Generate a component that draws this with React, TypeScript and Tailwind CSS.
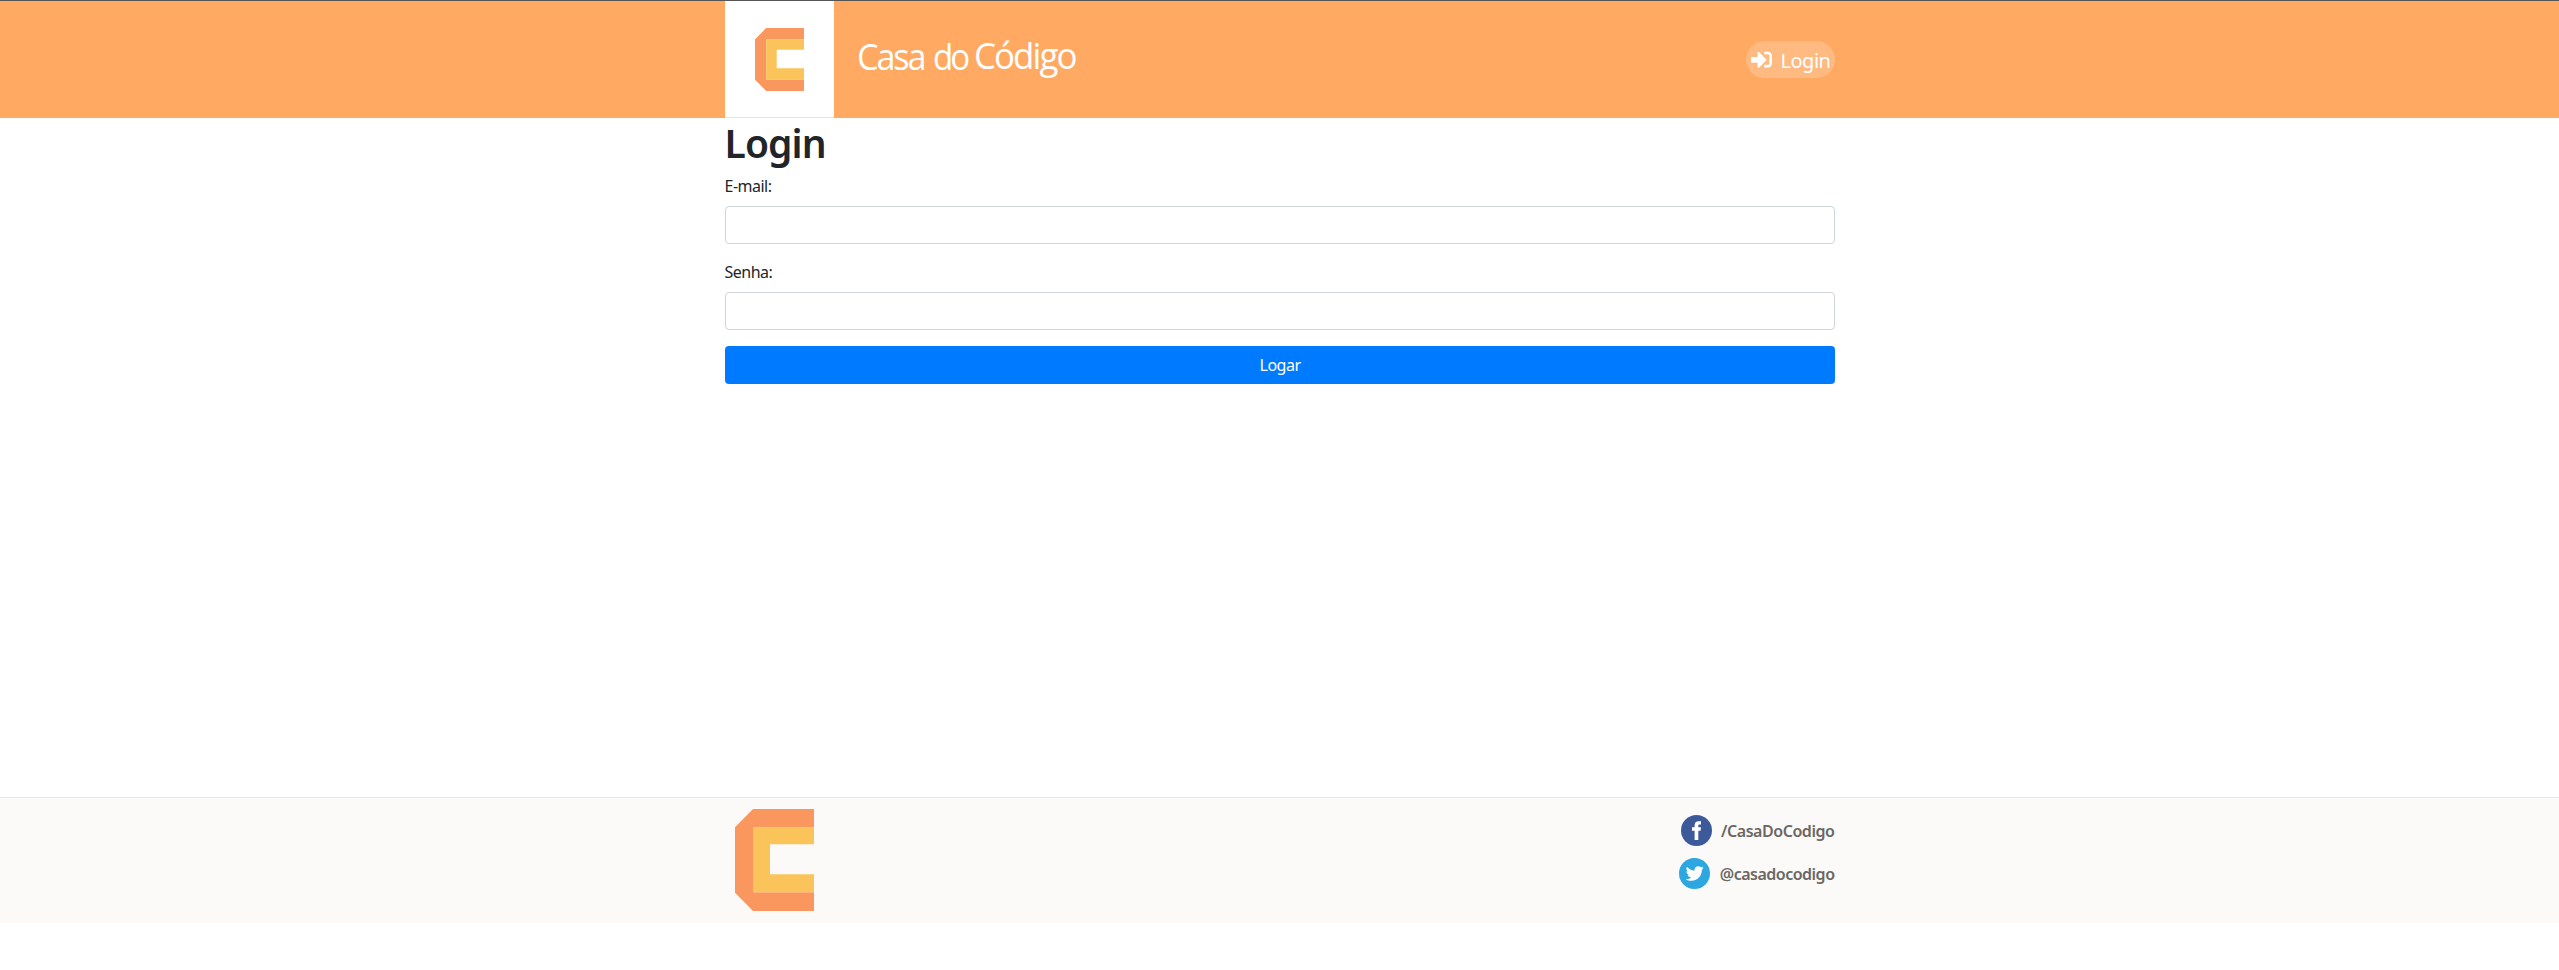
import { FaSignInAlt, FaTwitter } from "react-icons/fa";

function Logo({ className }: { className: string }) {
  return (
    <svg className={className} viewBox="0 0 79 103" preserveAspectRatio="none" aria-hidden="true">
      <path d="M18 0H79V18.5H18V84H79V103H18L0 84.5V18.5Z" fill="#fa975f" />
      <path d="M18 18.5H79V35.5H35V66H79V84H18Z" fill="#fac45a" />
    </svg>
  );
}

function Field({ label, type }: { label: string; type: string }) {
  return (
    <label className="mb-4 block">
      <span className="mb-2 block h-6 text-[16px] leading-[25px] tracking-[-0.5px]">{label}</span>
      <input type={type} className="block h-[38px] w-full rounded-[4px] border border-[#ced4da] bg-white px-3" />
    </label>
  );
}

export default function App() {
  return (
    <div className="min-h-[970px] bg-white font-['Noto_Sans',sans-serif] text-[#212529]">
      <header className="h-[118px] border-t border-[#555] bg-[#ffa962]">
        <div className="mx-auto flex h-[117px] w-[1110px] items-start">
          <div className="flex h-[117px] w-[109px] shrink-0 border-b border-[#ffdfc7] bg-white pt-[27px] pl-[30px]">
            <Logo className="h-[63px] w-[49px]" />
          </div>
          <div className="mt-8 ml-[23px] flex h-12 w-[230px] font-['Open_Sans',sans-serif] text-[36px] leading-[48px] font-normal whitespace-nowrap text-white">
            <span className="w-[80px] shrink-0 origin-left scale-x-[0.95] tracking-[-2.2px]">Casa</span>
            <span className="-ml-[4px] w-[41px] shrink-0 origin-left scale-x-[0.92] tracking-[-3.2px]">do</span>
            <span className="-mt-px origin-left scale-x-[0.97] tracking-[-2px]">Código</span>
          </div>
          <a href="#login" className="mt-10 ml-auto flex h-[37px] w-[89px] items-center rounded-[19px] bg-[#ffba81] pl-[5px] text-[20px] text-white">
            <FaSignInAlt className="size-[21px] shrink-0" />
            <span className="mt-[2px] ml-[9px] tracking-[-0.5px]">Login</span>
          </a>
        </div>
      </header>

      <main className="mx-auto h-[679px] w-[1110px]">
        <h1 className="mb-2 h-12 text-[39px] leading-[50px] font-semibold tracking-[-0.9px]">Login</h1>
        <form>
          <Field label="E-mail:" type="email" />
          <Field label="Senha:" type="password" />
          <button type="button" className="block h-[38px] w-full rounded-[4px] bg-[#007bff] pl-px text-[16px] tracking-[-0.5px] text-white">
            Logar
          </button>
        </form>
      </main>

      <footer className="h-[126px] border-t border-[#e7e7e9] bg-[#fbfaf8]">
        <div className="mx-auto flex w-[1110px] items-start justify-between">
          <Logo className="mt-[11px] ml-[10px] h-[102px] w-[79px]" />
          <ul className="mt-[17px] flex flex-col items-end gap-3 text-[16px] font-semibold text-[#6b6763]">
            <li className="flex h-[31px] items-center">
              <svg className="size-[31px]" viewBox="0 0 31 31" aria-hidden="true">
                <circle cx="15.5" cy="15.5" r="15.5" fill="#3c5a9a" />
                <path d="M13.6 25V15.7H11V12.3H13.6V10.5C13.6 7.8 15 6.3 17.7 6.3H20V9.5H18.6C17.6 9.5 17.3 10 17.3 10.9V12.3H20L19.6 15.7H17.3V25Z" fill="#fff" />
              </svg>
              <span className="ml-[9px] w-[114px] text-right tracking-[-0.45px] whitespace-nowrap">/CasaDoCodigo</span>
            </li>
            <li className="flex h-[31px] items-center">
              <svg className="size-[31px]" viewBox="0 0 31 31" aria-hidden="true">
                <circle cx="15.5" cy="15.5" r="15.5" fill="#2ca7e0" />
                <FaTwitter x="6.7" y="6.5" size="18" color="#fff" />
              </svg>
              <span className="ml-[9px] w-[116px] text-right tracking-[-0.5px] whitespace-nowrap">@casadocodigo</span>
            </li>
          </ul>
        </div>
      </footer>
    </div>
  );
}
